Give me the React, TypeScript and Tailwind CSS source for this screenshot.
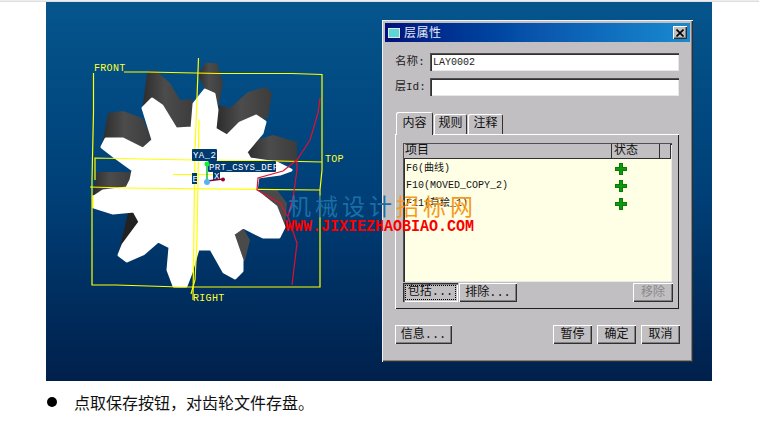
import React from "react";

const cjk = "font-['Liberation_Mono','Noto_Sans_CJK_SC',monospace]";
const raised = "shadow-[inset_1px_1px_0_#fff,inset_-1px_-1px_0_#303030,inset_-2px_-2px_0_#808080]";
const sunken = "shadow-[inset_1px_1px_0_#505050,inset_2px_2px_0_#303030,inset_-1px_-1px_0_#e8e8e8]";

function Btn({ w, label, disabled, pressed }: { w: string; label: string; disabled?: boolean; pressed?: boolean }) {
  return (
    <div
      className={`${w} h-[19px] flex items-center justify-center whitespace-nowrap bg-[#c2bfc2] text-[12px] leading-none ${
        pressed ? "shadow-[inset_1px_1px_0_#303030,inset_2px_2px_0_#808080,inset_-1px_-1px_0_#fff]" : raised
      } ${disabled ? "text-[#8a888a]" : "text-[#111]"}`}
    >
      {pressed ? (
        <span className="border border-dotted border-black px-[2px] leading-[13px]">{label}</span>
      ) : (
        label
      )}
    </div>
  );
}

function Plus() {
  return (
    <svg width="12" height="12" viewBox="0 0 12 12" className="block">
      <path d="M4 0h4v4h4v4H8v4H4V8H0V4h4z" fill="#0a7a0a" />
      <path d="M5 1h2v4h4v2H7v4H5V7H1V5h4z" fill="#0a9a0a" />
    </svg>
  );
}

function Row({ text }: { text: string }) {
  return (
    <div className="h-[17.5px] flex items-center">
      <div className="w-[211px] pl-[2px] text-[10px] leading-none text-[#111] whitespace-nowrap">{text}</div>
      <Plus />
    </div>
  );
}

function Tab({ label, active, w }: { label: string; active?: boolean; w: string }) {
  return (
    <div
      className={`${w} flex items-center justify-center text-[12px] leading-none text-[#111] rounded-t-[2px] bg-[#c2bfc2] ${
        active
          ? "h-[23px] relative z-10 -mb-[1px] shadow-[inset_1px_1px_0_#fff,inset_-1px_0_0_#303030]"
          : "h-[20px] shadow-[inset_1px_1px_0_#fff,inset_-1px_0_0_#303030]"
      }`}
    >
      {label}
    </div>
  );
}

function Gear() {
  return (
    <svg width="336" height="379" viewBox="46 2 336 379" className="block shrink-0">
      <defs>
        <linearGradient id="g1" x1="0" x2="1" y1="0" y2="0">
          <stop offset="0" stopColor="#2c2c2c" />
          <stop offset="0.45" stopColor="#4c4c4c" />
          <stop offset="1" stopColor="#3c3c3c" />
        </linearGradient>
      </defs>
      <g fill="url(#g1)">
        <polygon points="102,145 108,113 123,111 142,118 152,138 143,148" />
        <polygon points="142,112 147,73 155,70 170,83 180,100 193,99 192,127 177,128 163,105" />
        <polygon points="198,75 205,63 217,63 223,83 218,107 205,89" />
        <polygon points="216,128 218,105 230,108 248,92 265,87 272,93 268,118 240,122 227,135" />
        <polygon points="247,152 257,140 273,135 297,142 297,163 277,162 250,160" />
        <polygon points="97,172 131,172 131,183 126,187 103,190 93,195" />
        <polygon points="120,247 128,213 135,212 139,222" fill="#222" />
        <polygon points="255,203 257,191 277,190 287,203 285,227 277,207" fill="#4a4a4a" />
        <polygon points="233,235 243,228 250,240 245,260 243,262" fill="#4a4a4a" />
      </g>
      <polygon
        fill="#fff"
        stroke="#fff"
        strokeWidth="3"
        strokeLinejoin="round"
        points="143,108 152,99 162,106 176,129 192,128 194,104 205,90 214,94 217,110 215,129 227,136 240,123 256,116 265,122 262,133 246,152 250,159 277,163 291,170 280,174 258,177 256,191 276,207 284,227 279,237 263,237 243,227 233,234 242,260 242,271 235,278 224,272 211,249 198,249 191,273 186,286 174,286 168,270 170,247 158,241 143,254 127,261 119,255 123,245 140,222 134,211 113,213 94,207 94,197 103,191 127,188 131,180 133,170 115,157 102,147 106,139 123,139 143,149 153,140"
      />
      <g fill="none" stroke="#ffff00" strokeWidth="1.2">
        <path d="M124 72H147L220 73.500L292 73.500L322 74.500V170L320 190V287L260 287H180L116 285H92V210V180L93.500 112V73" />
        <path d="M90 187L127 188L320 190" />
        <path d="M95 180V158L193 160L257 160.500L322 162" />
        <path d="M198.500 58L195 150L193 300" />
        <path d="M197 240L195 280L191 294" />
        <path d="M199 120L197 240" />
        <path d="M173 174.500H218" />
        <path d="M93 195V208" />
      </g>
      <g fill="none" stroke="#e01030" strokeWidth="1.2">
        <path d="M320 98L318 113L310 140L297 160L283 171L258 178L257 190L280 203L288 217L297 243L292 285" />
        <path d="M297 160V170L293 198L288 216" />
      </g>
      <g fontFamily="'Liberation Mono', monospace" fontSize="10" fill="#ffff30" letterSpacing="0.300">
        <text x="94" y="71">FRONT</text>
        <text x="325" y="162">TOP</text>
        <text x="193" y="301">RIGHT</text>
      </g>
      <g fill="#003a70">
        <rect x="192" y="149" width="25" height="12" rx="1" />
        <rect x="208" y="161" width="68" height="11" rx="1" />
        <rect x="213" y="172" width="7" height="8" />
        <rect x="192" y="173" width="5" height="11" />
      </g>
      <g fontFamily="'Liberation Mono', monospace" fontSize="9" fill="#fff" letterSpacing="0.400">
        <text x="193" y="158">YA_2</text>
        <text x="209" y="170">PRT_CSYS_DEF</text>
        <text x="214" y="179">X</text>
        <text x="192.500" y="182">E</text>
      </g>
      <path d="M207 164V181" stroke="#10c030" strokeWidth="1.500" />
      <path d="M207 181L223 179" stroke="#900030" strokeWidth="1.500" />
      <circle cx="223" cy="179.500" r="2" fill="#900030" />
      <circle cx="207" cy="164" r="2.500" fill="#10f030" />
      <circle cx="207" cy="182" r="3" fill="#58b4f0" />
    </svg>
  );
}

export default function App() {
  return (
    <div className="relative w-[759px] h-[426px] bg-white overflow-hidden font-['Noto_Sans_CJK_SC',sans-serif]">
      <div className="h-[2px] bg-gradient-to-b from-[#f4f4f4] to-[#d4d8dc]" />
      <div className="ml-[46px] w-[666px] h-[379px] flex bg-gradient-to-b from-[#05558c] via-[#004078] to-[#00204c]">
        <Gear />
        <div className={`${cjk} mt-[18px] w-[311px] h-[342px] p-[3px] bg-[#c2bfc2] shadow-[inset_1px_1px_0_#f0f0f0,inset_-1px_-1px_0_#303030,inset_-2px_-2px_0_#808080]`}>
          <div className="h-[19px] flex items-center bg-gradient-to-r from-[#00107c] via-[#0a56ad] to-[#1a8ad0] px-[3px]">
            <div className="w-[12px] h-[10px] bg-[#58d8d8] border border-[#e8e8e8] shadow-[1px_1px_0_#101060]" />
            <div className="ml-[4px] -mt-[2px] text-[12px] leading-none text-[#e8ecf8] tracking-[0.500px] font-['Noto_Sans_CJK_SC',sans-serif]">层属性</div>
            <div className={`ml-auto w-[14px] h-[13px] bg-[#c2bfc2] ${raised} flex items-center justify-center`}>
              <svg width="8" height="8" viewBox="0 0 8 8"><path d="M0.500 0.500L7.500 7.500M7.500 0.500L0.500 7.500" stroke="#000" strokeWidth="1.600" /></svg>
            </div>
          </div>

          <div className="px-[10px]">
            <div className="mt-[11px] flex items-center h-[18px]">
              <div className="w-[35px] text-[11.500px] leading-none text-[#222]">名称:</div>
              <div className={`w-[249px] h-[18px] bg-white ${sunken} pl-[3px] flex items-center text-[10px] text-[#222]`}>LAY0002</div>
            </div>
            <div className="mt-[7px] flex items-center h-[18px]">
              <div className="w-[35px] text-[11px] leading-none text-[#222] whitespace-nowrap">层Id:</div>
              <div className={`w-[249px] h-[18px] bg-white ${sunken}`} />
            </div>

            <div className="mt-[15px] ml-[1px] flex items-end gap-[1px] h-[23px]">
              <Tab label="内容" active w="w-[37px]" />
              <Tab label="规则" w="w-[33px]" />
              <Tab label="注释" w="w-[35px]" />
            </div>
            <div className="w-[284px] h-[175px] pt-[9px] pl-[8px] shadow-[inset_1px_1px_0_#fff,inset_-1px_-1px_0_#202020]">
              <div className={`w-[269px] h-[139px] bg-[#ffffe6] flex flex-col ${sunken} p-[1px]`}>
                <div className="h-[15px] flex bg-[#c2bfc2] text-[12px] leading-none text-[#111] shrink-0 shadow-[inset_0_-1px_0_#303030]">
                  <div className="w-[208px] pl-[1px] pt-[1px] shadow-[inset_-1px_0_0_#303030]">项目</div>
                  <div className="w-[48px] pl-[2px] pt-[1px] shadow-[inset_-1px_0_0_#303030]">状态</div>
                  <div className="w-[11px] shadow-[inset_-1px_0_0_#303030]" />
                </div>
                <div className="pt-[1px]">
                  <Row text="F6(曲线)" />
                  <Row text="F10(MOVED_COPY_2)" />
                  <Row text="F11(草绘_1)" />
                </div>
              </div>
              <div className="flex mt-[1px] w-[270px]">
                <Btn w="w-[55px]" label="包括..." pressed />
                <div className="w-[1px]" />
                <Btn w="w-[58px]" label="排除..." />
                <div className="ml-auto" />
                <Btn w="w-[40px]" label="移除" disabled />
              </div>
            </div>

            <div className="mt-[16px] flex">
              <Btn w="w-[57px]" label="信息..." />
              <div className="ml-auto" />
              <Btn w="w-[39px]" label="暂停" />
              <div className="w-[5px]" />
              <Btn w="w-[39px]" label="确定" />
              <div className="w-[5px]" />
              <Btn w="w-[39px]" label="取消" />
            </div>
          </div>
        </div>
      </div>

      <div className="mt-[13px] ml-[47px] flex items-center h-[20px] -translate-y-[2px]">
        <div className="w-[10px] h-[10px] rounded-full bg-black" />
        <div className="ml-[17px] text-[16px] leading-[20px] text-[#111]">点取保存按钮，对齿轮文件存盘。</div>
      </div>

      <div className="absolute left-[288px] top-[192px] text-[23px] leading-[26px] tracking-[4px] whitespace-nowrap">
        <span className="text-[#1c6ea6]">机械设计</span>
        <span className="text-[#f59a1c]">招标网</span>
      </div>
      <div className="absolute left-[285px] top-[218px] text-[15px] leading-[16px] font-bold text-[#f80000] whitespace-nowrap font-['Liberation_Mono',monospace] scale-y-[1.150] origin-top">
        WWW.JIXIEZHAOBIAO.COM
      </div>
    </div>
  );
}
